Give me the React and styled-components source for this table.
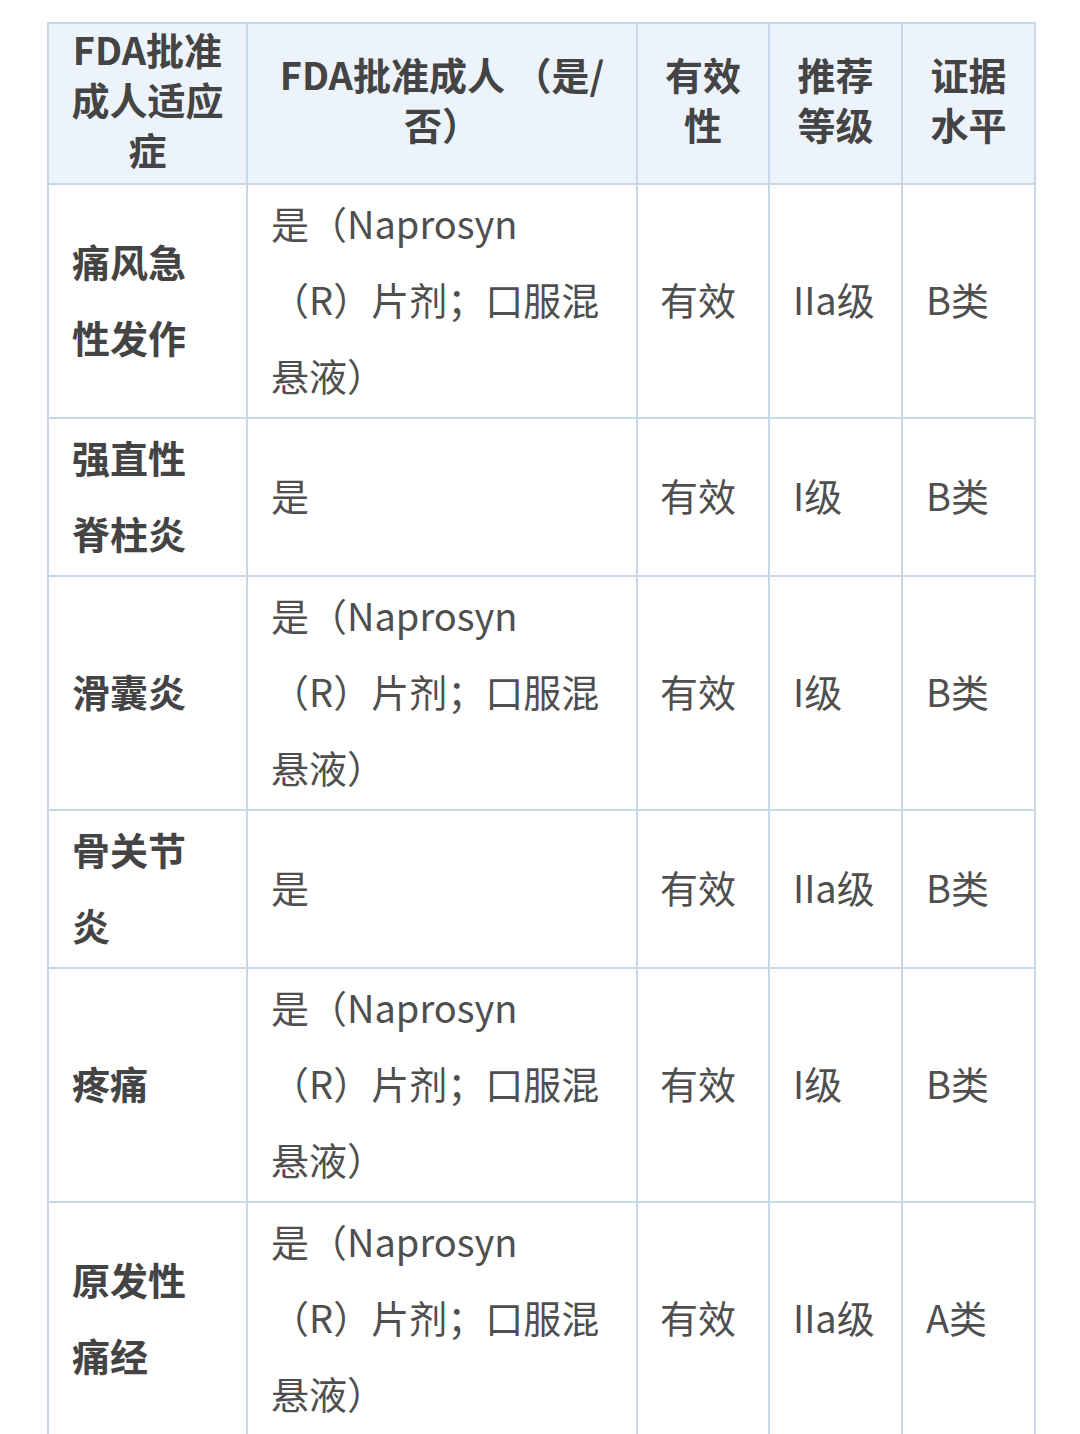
import React from 'react';
import styled, { createGlobalStyle } from 'styled-components';

const GlobalStyle = createGlobalStyle`
  body {
    margin: 0;
    background: #ffffff;
    font-family: "Noto Sans CJK SC", "Noto Sans", sans-serif;
  }
`

const Page = styled.div`
  padding: 22px 0 0 47px;
  height: 1434px;
  overflow: hidden;
  box-sizing: border-box;
`

const Table = styled.table`
  border-collapse: collapse;
  table-layout: fixed;
  width: 989px;
`

const HeadCell = styled.th`
  background: #edf3fb;
  border: 2px solid #c9d8e7;
  padding: 0 8px 9px;
  font-size: 38px;
  line-height: 50px;
  font-weight: 700;
  color: #444444;
  text-align: center;
  vertical-align: middle;
`

const Cell = styled.td`
  border: 2px solid #c9d8e7;
  padding: 0 ${p => p.$pad || 23}px 4px;
  font-size: 38px;
  line-height: 76px;
  font-weight: ${p => (p.$bold ? 700 : 400)};
  color: ${p => (p.$bold ? '#444444' : '#4f4f4f')};
  text-align: left;
  vertical-align: middle;
  white-space: nowrap;
`

const Line = styled.span`
  display: block;
`

const cols = [199, 390, 132, 133, 133]

const head = [
  ['FDA批准', '成人适应', '症'],
  ['FDA批准成人 （是/', '否）'],
  ['有效', '性'],
  ['推荐', '等级'],
  ['证据', '水平'],
]

const naprosyn = ['是（Naprosyn', '（R）片剂；口服混', '悬液）']

const rows = [
  { name: ['痛风急', '性发作'], fda: naprosyn, eff: '有效', grade: 'IIa级', level: 'B类' },
  { name: ['强直性', '脊柱炎'], fda: ['是'], eff: '有效', grade: 'I级', level: 'B类' },
  { name: ['滑囊炎'], fda: naprosyn, eff: '有效', grade: 'I级', level: 'B类' },
  { name: ['骨关节', '炎'], fda: ['是'], eff: '有效', grade: 'IIa级', level: 'B类' },
  { name: ['疼痛'], fda: naprosyn, eff: '有效', grade: 'I级', level: 'B类' },
  { name: ['原发性', '痛经'], fda: naprosyn, eff: '有效', grade: 'IIa级', level: 'A类' },
]

function Lines({ items }) {
  return items.map((t, i) => <Line key={i}>{t}</Line>)
}

export default function App() {
  return (
    <Page>
      <GlobalStyle />
      <Table>
        <colgroup>
          {cols.map((w, i) => <col key={i} style={{ width: w }} />)}
        </colgroup>
        <thead>
          <tr>
            {head.map((h, i) => (
              <HeadCell key={i}><Lines items={h} /></HeadCell>
            ))}
          </tr>
        </thead>
        <tbody>
          {rows.map((r, i) => (
            <tr key={i}>
              <Cell $bold><Lines items={r.name} /></Cell>
              <Cell><Lines items={r.fda} /></Cell>
              <Cell $pad={22}>{r.eff}</Cell>
              <Cell>{r.grade}</Cell>
              <Cell>{r.level}</Cell>
            </tr>
          ))}
        </tbody>
      </Table>
    </Page>
  )
}
